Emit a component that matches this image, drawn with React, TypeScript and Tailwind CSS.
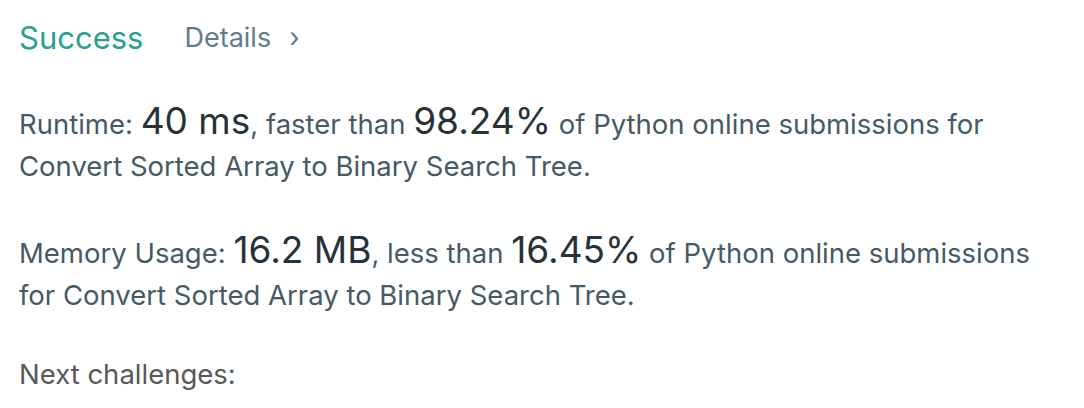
const Big = ({ children }: { children: React.ReactNode }) => (
  <span className="text-[37px] text-[#263238] leading-[38px]">{children}</span>
);

export default function App() {
  return (
    <div className="min-h-screen bg-white px-[19px] pt-[18px] text-[#455a64]" style={{ fontFamily: 'Inter, "Noto Sans", sans-serif' }}>
      <div className="flex items-center h-[40px]">
        <span className="text-[31px] text-[#2aa08f]">Success</span>
        <span className="ml-[41px] text-[27px] text-[#607d8b]">Details</span>
        <span className="ml-[18px] text-[27px] text-[#607d8b]">›</span>
      </div>

      <p className="mt-[44px] text-[27.5px] leading-[42px]">
        Runtime: <Big>40 ms</Big>, faster than <Big>98.24%</Big> of Python online submissions for Convert Sorted Array to
        Binary Search Tree.
      </p>

      <p className="mt-[44px] text-[27.5px] leading-[42px]">
        Memory Usage: <Big>16.2 MB</Big>, less than <Big>16.45%</Big> of Python online submissions for Convert Sorted Array
        to Binary Search Tree.
      </p>

      <p className="mt-[37px] text-[27.5px] leading-[42px] text-[#595959]">Next challenges:</p>
    </div>
  );
}
